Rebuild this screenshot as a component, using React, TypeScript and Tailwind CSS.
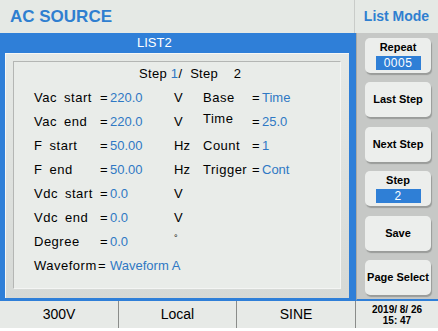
import React from "react";

const BLUE = "text-[#2f78c4]";

function Row({ label, value, unit, label2, value2, lift }: { label: string; value: string; unit?: string; label2?: string; value2?: string; lift?: boolean }) {
  return (
    <div className="grid h-[24px] items-center grid-cols-[66px_10px_64px_29px_49px_10px_1fr]">
      <span className="tracking-[0.5px] [word-spacing:3px] whitespace-nowrap">{label}</span>
      <span>=</span>
      <span className={BLUE}>{value}</span>
      <span className={unit === "°" ? "text-[9px] -translate-y-[4px]" : ""}>{unit ?? ""}</span>
      <span className={"tracking-[0.5px] whitespace-nowrap " + (lift ? "-translate-y-[3px]" : "")}>{label2 ?? ""}</span>
      <span>{label2 ? "=" : ""}</span>
      <span className={BLUE}>{value2 ?? ""}</span>
    </div>
  );
}

function Btn({ children, h = "h-[35px]" }: { children: React.ReactNode; h?: string }) {
  return (
    <div className={`${h} w-[66px] rounded-[5px] bg-[#eceeec] shadow-[1px_2px_1px_#9a9c9a] flex flex-col items-center justify-center text-[11px] font-bold text-black leading-[13px]`}>
      {children}
    </div>
  );
}

function Badge({ children }: { children: React.ReactNode }) {
  return (
    <div className="mt-[2px] w-[45px] h-[14px] bg-[#2f7fd6] text-white text-[12px] font-normal leading-[14px] text-center tracking-[0.5px]">
      {children}
    </div>
  );
}

export default function App() {
  return (
    <div className="w-[438px] h-[331px] bg-white flex flex-col text-black" style={{ fontFamily: '"Liberation Sans", Arial, sans-serif' }}>
      {/* header */}
      <div className="h-[33px] flex bg-[#e5e9e5]">
        <div className="w-[355px] border-r border-[#c9ccc9] flex items-center pl-[10px] text-[17px] font-bold text-[#2f7fd0]">
          AC SOURCE
        </div>
        <div className="flex-1 flex items-center justify-center text-[14px] font-bold text-[#2f7fd0]">List Mode</div>
      </div>

      {/* middle */}
      <div className="h-[268px] flex">
        <div className="w-[356px] bg-[#2f7fd8] flex flex-col">
          <div className="h-[20px] flex items-center pl-[137px] text-white text-[13px]">LIST2</div>
          <div className="ml-[5px] w-[344px] h-[245px] border-t border-l border-[#f6f7f6] pt-[7px] pl-[7px] pr-[8px] pb-[9px] bg-gradient-to-b from-[#e6e9e6] to-[#d6d9d6]">
            <div className="w-full h-full bg-[#e9ece9] border-t border-l border-[#b4b6b4] border-b border-r border-b-[#f4f5f4] border-r-[#f4f5f4] pl-[20px] text-[13px] leading-[16px]">
              <div className="h-[24px] flex items-center pl-[105px] whitespace-pre tracking-[0.3px]">
                <span>Step </span>
                <span className={BLUE}>1</span>
                <span>/  Step    2</span>
              </div>
              <Row label="Vac start" value="220.0" unit="V" label2="Base" value2="Time" />
              <Row label="Vac end" value="220.0" unit="V" label2="Time" value2="25.0" lift />
              <Row label="F start" value="50.00" unit="Hz" label2="Count" value2="1" />
              <Row label="F end" value="50.00" unit="Hz" label2="Trigger" value2="Cont" />
              <Row label="Vdc start" value="0.0" unit="V" />
              <Row label="Vdc end" value="0.0" unit="V" />
              <Row label="Degree" value="0.0" unit="°" />
              <div className="h-[24px] flex items-center">
                <span className="w-[64px] tracking-[0.5px]">Waveform</span>
                <span className="w-[12px]">=</span>
                <span className={BLUE}>Waveform A</span>
              </div>
            </div>
          </div>
        </div>
        <div className="flex-1 bg-[#c6c8c6] border-l border-[#a8aaa8] border-b-2 border-b-[#2f7fd8] flex flex-col items-center justify-between pt-[5px] pb-[4px] pl-[1px]">
          <Btn>
            <span>Repeat</span>
            <Badge>0005</Badge>
          </Btn>
          <Btn>Last Step</Btn>
          <Btn>Next Step</Btn>
          <Btn>
            <span>Step</span>
            <Badge>2</Badge>
          </Btn>
          <Btn>Save</Btn>
          <Btn>Page Select</Btn>
        </div>
      </div>

      {/* status */}
      <div className="h-[27px] flex bg-[#e7eae7] text-[14px]">
        <div className="w-[119px] border-r border-[#8a8c8a] flex items-center justify-center">300V</div>
        <div className="w-[118px] border-r border-[#8a8c8a] flex items-center justify-center">Local</div>
        <div className="w-[119px] border-r border-[#8a8c8a] flex items-center justify-center">SINE</div>
        <div className="flex-1 flex flex-col items-center justify-center text-[10px] font-bold leading-[11px] whitespace-pre">
          <span>2019/ 8/ 26</span>
          <span>15: 47</span>
        </div>
      </div>
      <div className="flex-1 bg-white" />
    </div>
  );
}
